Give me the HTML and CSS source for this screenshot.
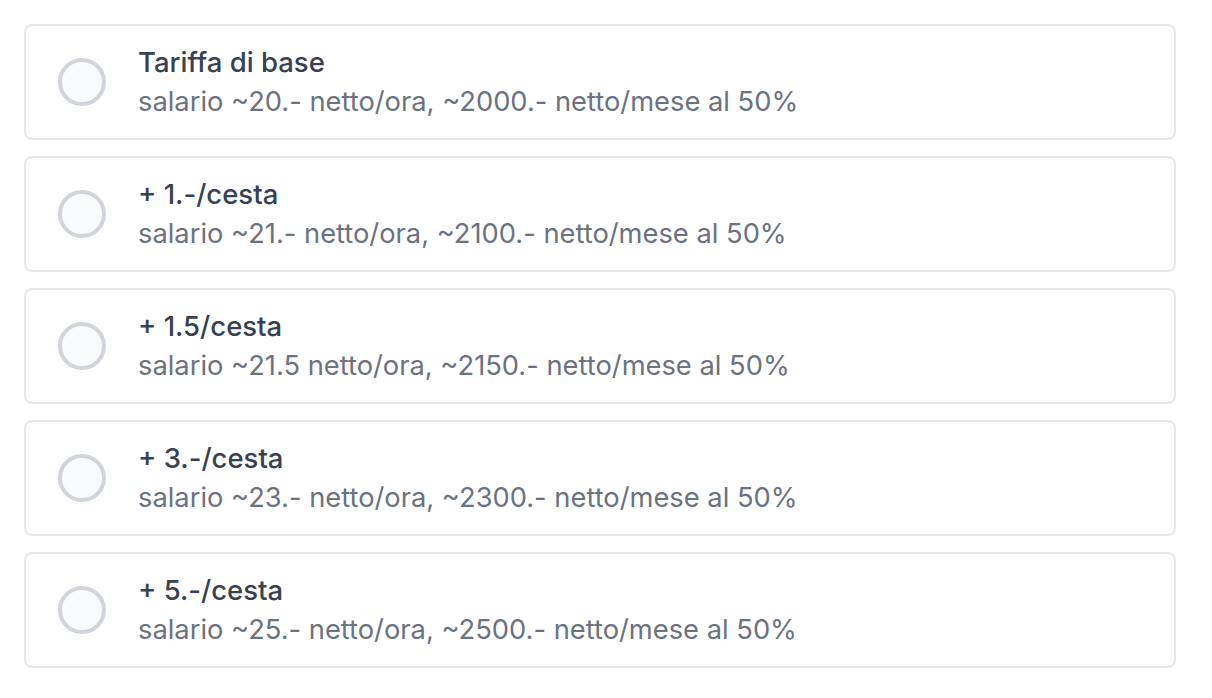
FILE: index.html
```
<!DOCTYPE html>
<html lang="it">
<head>
<meta charset="utf-8">
<link rel="stylesheet" href="styles.css">
</head>
<body>
<div class="list">
  <label class="option">
    <span class="radio"></span>
    <span class="text">
      <span class="title">Tariffa di base</span>
      <span class="desc">salario ~20.- netto/ora, ~2000.- netto/mese al 50%</span>
    </span>
  </label>
  <label class="option">
    <span class="radio"></span>
    <span class="text">
      <span class="title">+ 1.-/cesta</span>
      <span class="desc">salario ~21.- netto/ora, ~2100.- netto/mese al 50%</span>
    </span>
  </label>
  <label class="option">
    <span class="radio"></span>
    <span class="text">
      <span class="title">+ 1.5/cesta</span>
      <span class="desc">salario ~21.5 netto/ora, ~2150.- netto/mese al 50%</span>
    </span>
  </label>
  <label class="option">
    <span class="radio"></span>
    <span class="text">
      <span class="title">+ 3.-/cesta</span>
      <span class="desc">salario ~23.- netto/ora, ~2300.- netto/mese al 50%</span>
    </span>
  </label>
  <label class="option">
    <span class="radio"></span>
    <span class="text">
      <span class="title">+ 5.-/cesta</span>
      <span class="desc">salario ~25.- netto/ora, ~2500.- netto/mese al 50%</span>
    </span>
  </label>
</div>
</body>
</html>
```
FILE: styles.css
```
html, body {
  margin: 0;
  padding: 0;
  background: #ffffff;
}
body {
  font-family: Inter, "Noto Sans", sans-serif;
}
.list {
  width: 1152px;
  padding: 24px 0 0 24px;
  display: flex;
  flex-direction: column;
  gap: 16px;
}
.option {
  display: flex;
  align-items: center;
  gap: 32px;
  height: 116px;
  box-sizing: border-box;
  border: 2px solid #e5e7eb;
  border-radius: 8px;
  padding: 0 32px;
  background: #fff;
}
.radio {
  width: 48px;
  height: 48px;
  box-sizing: border-box;
  border: 4px solid #d1d5db;
  border-radius: 50%;
  background: #f9fafb;
  flex: none;
}
.text {
  display: flex;
  flex-direction: column;
}
.title {
  font-size: 27.5px;
  line-height: 40px;
  font-weight: 500;
  color: #374151;
}
.desc {
  font-size: 27.3px;
  line-height: 40px;
  color: #6b7280;
}
```
